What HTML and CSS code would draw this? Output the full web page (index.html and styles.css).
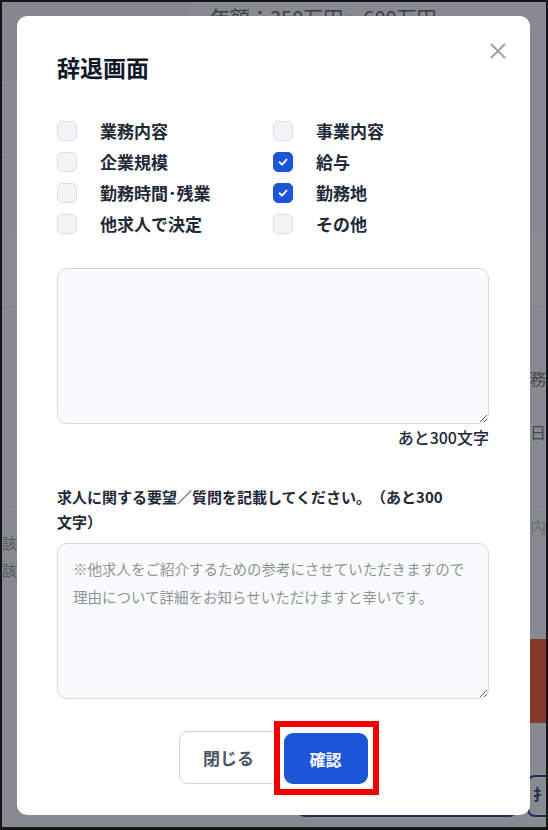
FILE: index.html
```html
<!DOCTYPE html>
<html lang="ja">
<head>
<meta charset="utf-8">
<title>辞退画面</title>
<link rel="stylesheet" href="styles.css">
</head>
<body>
<div class="screen">
  <div class="bg-page" aria-hidden="true">
    <div class="bg-row bg-r1"><div class="bg-side"></div><div class="bg-salary">年額：350万円～600万円</div></div>
    <div class="bg-row bg-r2"></div>
    <div class="bg-row bg-r3"></div>
    <div class="bg-row bg-r4"></div>
    <div class="bg-row bg-r5"></div>
    <div class="bg-row bg-r6"><span class="bg-right">務</span></div>
    <div class="bg-row bg-r7"><span class="bg-right">司日</span></div>
    <div class="bg-row bg-r8"></div>
    <div class="bg-row bg-r9">
      <div class="bg-left">該<br>該</div>
      <div class="bg-right-light">職内</div>
    </div>
    <div class="bg-row bg-r10"><div class="bg-red"></div></div>
    <div class="bg-row bg-r11"></div>
    <div class="bg-row bg-r12"><div class="bg-btn"></div><div class="bg-btn bg-btn2">扌</div></div>
  </div>

  <div class="modal" role="dialog" aria-labelledby="modal-title">
    <button class="close" type="button" aria-label="閉じる">
      <svg width="16" height="16" viewBox="0 0 16 16"><path d="M1.5 1.5 L14.5 14.5 M14.5 1.5 L1.5 14.5" stroke="#9ca3af" stroke-width="2" stroke-linecap="round" fill="none"/></svg>
    </button>
    <h2 class="title" id="modal-title">辞退画面</h2>

    <div class="reasons">
      <label class="reason"><span class="box"></span><span class="reason-text">業務内容</span></label>
      <label class="reason"><span class="box"></span><span class="reason-text">事業内容</span></label>
      <label class="reason"><span class="box"></span><span class="reason-text">企業規模</span></label>
      <label class="reason"><span class="box checked"><svg width="12" height="12" viewBox="0 0 12 12"><path d="M2.6 6.3 L5 8.6 L9.5 3.6" stroke="#fff" stroke-width="1.9" fill="none" stroke-linecap="round" stroke-linejoin="round"/></svg></span><span class="reason-text">給与</span></label>
      <label class="reason"><span class="box"></span><span class="reason-text">勤務時間･残業</span></label>
      <label class="reason"><span class="box checked"><svg width="12" height="12" viewBox="0 0 12 12"><path d="M2.6 6.3 L5 8.6 L9.5 3.6" stroke="#fff" stroke-width="1.9" fill="none" stroke-linecap="round" stroke-linejoin="round"/></svg></span><span class="reason-text">勤務地</span></label>
      <label class="reason"><span class="box"></span><span class="reason-text">他求人で決定</span></label>
      <label class="reason"><span class="box"></span><span class="reason-text">その他</span></label>
    </div>

    <textarea class="memo memo-first" aria-label="その他の理由"></textarea>
    <div class="counter">あと300文字</div>

    <label class="q-label" for="request">求人に関する要望／質問を記載してください。（あと300文字）</label>
    <textarea class="memo memo-second" id="request" placeholder="※他求人をご紹介するための参考にさせていただきますので&#10;理由について詳細をお知らせいただけますと幸いです。"></textarea>

    <div class="actions">
      <button class="btn btn-close" type="button">閉じる</button>
      <span class="confirm-wrap"><button class="btn btn-confirm" type="button">確認</button></span>
    </div>
  </div>
</div>
</body>
</html>
```

FILE: styles.css
```css
* { box-sizing: border-box; }

html, body {
  margin: 0;
  padding: 0;
  background: #111;
}

body {
  font-family: "Noto Sans CJK JP", "Noto Sans", sans-serif;
  color: #1f2937;
}

.screen {
  position: relative;
  width: 548px;
  height: 830px;
  border: 2px solid #151515;
  border-bottom-width: 3px;
  background: #878a91;
  overflow: hidden;
}

/* ---------- dimmed page behind the dialog ---------- */
.bg-page {
  display: flex;
  flex-direction: column;
  width: 100%;
  height: 100%;
  color: #45474d;
  font-size: 16px;
  line-height: 20px;
  white-space: nowrap;
}

.bg-row {
  flex: none;
  border-bottom: 1px solid #80838a;
}

.bg-r1 { height: 79px; display: flex; }
.bg-side { width: 186px; background: #85878e; }
.bg-salary {
  padding: 2px 0 0 22px;
  font-size: 20px;
  line-height: 28px;
  color: #3c3e44;
}
.bg-r2 { height: 77px; }
.bg-r3 { height: 73px; }
.bg-r4 { height: 77px; background: #898b92; }
.bg-r5 { height: 30px; }
.bg-r6 { height: 80px; padding: 30px 0 0 528px; border-bottom: none; }
.bg-r7 { height: 40px; padding: 4px 0 0 512px; border-bottom: none; }
.bg-r8 { height: 50px; }
.bg-r9 {
  height: 131px;
  display: flex;
  justify-content: space-between;
  border-bottom: none;
}
.bg-left {
  padding-top: 21px;
  line-height: 27px;
  font-size: 15px;
  color: #55575d;
}
.bg-right-light {
  padding: 8px 0 0 0;
  color: #6c6e75;
}
.bg-r10 { height: 84px; border-bottom: none; padding-left: 440px; }
.bg-red { width: 200px; height: 100%; background: #873a29; }
.bg-r11 { height: 28px; }
.bg-r12 {
  display: flex;
  gap: 10px;
  padding: 24px 0 0 295px;
  border-bottom: none;
}
.bg-btn {
  flex: none;
  width: 220px;
  height: 42px;
  border: 2px solid #1d2f58;
  border-radius: 8px;
}
.bg-btn2 {
  width: 120px;
  padding: 7px 0 0 4px;
  font-size: 15px;
  color: #1d2f58;
  font-weight: 700;
}

/* ---------- dialog ---------- */
.modal {
  position: absolute;
  left: 15px;
  top: 14px;
  width: 513px;
  padding: 35px 41px 31px 40px;
  background: #fff;
  border-radius: 10px;
  display: flex;
  flex-direction: column;
}

.close {
  position: absolute;
  top: 27px;
  right: 24px;
  width: 16px;
  height: 16px;
  padding: 0;
  border: none;
  background: none;
  display: flex;
  cursor: pointer;
}

.title {
  margin: 0;
  font-size: 23px;
  line-height: 32px;
  font-weight: 700;
  color: #111827;
}

.reasons {
  margin-top: 32px;
  display: grid;
  grid-template-columns: 1fr 1fr;
  grid-auto-rows: 31px;
}

.reason {
  display: flex;
  align-items: center;
  gap: 23px;
}

.box {
  flex: none;
  width: 20px;
  height: 20px;
  border: 1px solid #dcdfe4;
  border-radius: 5px;
  background: #f3f4f6;
  display: flex;
  align-items: center;
  justify-content: center;
}

.box.checked {
  background: #1c55d8;
  border-color: #1c55d8;
}

.reason-text {
  font-size: 17px;
  line-height: 24px;
  font-weight: 600;
  color: #1f2937;
}

.memo {
  display: block;
  width: 100%;
  height: 156px;
  margin: 0;
  padding: 11px 15px;
  border: 1px solid #d6d9de;
  border-radius: 10px;
  background: #f9fafb;
  font-family: inherit;
  font-size: 14.5px;
  line-height: 28px;
  color: #1f2937;
  resize: vertical;
}

.memo::placeholder {
  color: #8f939a;
}

.memo-first { margin-top: 29px; }

.counter {
  margin-top: 3px;
  text-align: right;
  font-size: 16px;
  line-height: 20px;
  font-weight: 500;
  color: #1f2937;
}

.q-label {
  display: block;
  margin-top: 37px;
  max-width: 395px;
  font-size: 15px;
  line-height: 25px;
  font-weight: 700;
  color: #1f2937;
  text-spacing-trim: space-all;
}

.memo-second { margin-top: 9px; }

.actions {
  margin-top: 32px;
  display: flex;
  justify-content: center;
  align-items: flex-end;
  gap: 5px;
}

.btn {
  margin: 0;
  font-family: inherit;
  font-weight: 700;
  border-radius: 9px;
  cursor: pointer;
}

.btn-close {
  width: 100px;
  height: 53px;
  border: 1px solid #d1d5db;
  background: #fff;
  color: #4b5563;
  font-size: 17px;
}

.btn-confirm {
  display: block;
  width: 84px;
  height: 51px;
  border: none;
  background: #1c55d8;
  color: #fff;
  font-size: 16px;
}

.confirm-wrap {
  position: relative;
  display: block;
}

.confirm-wrap::after {
  content: "";
  position: absolute;
  top: -12px;
  left: -10px;
  right: -11px;
  bottom: -11px;
  border: 6px solid #f20000;
  pointer-events: none;
}
```
